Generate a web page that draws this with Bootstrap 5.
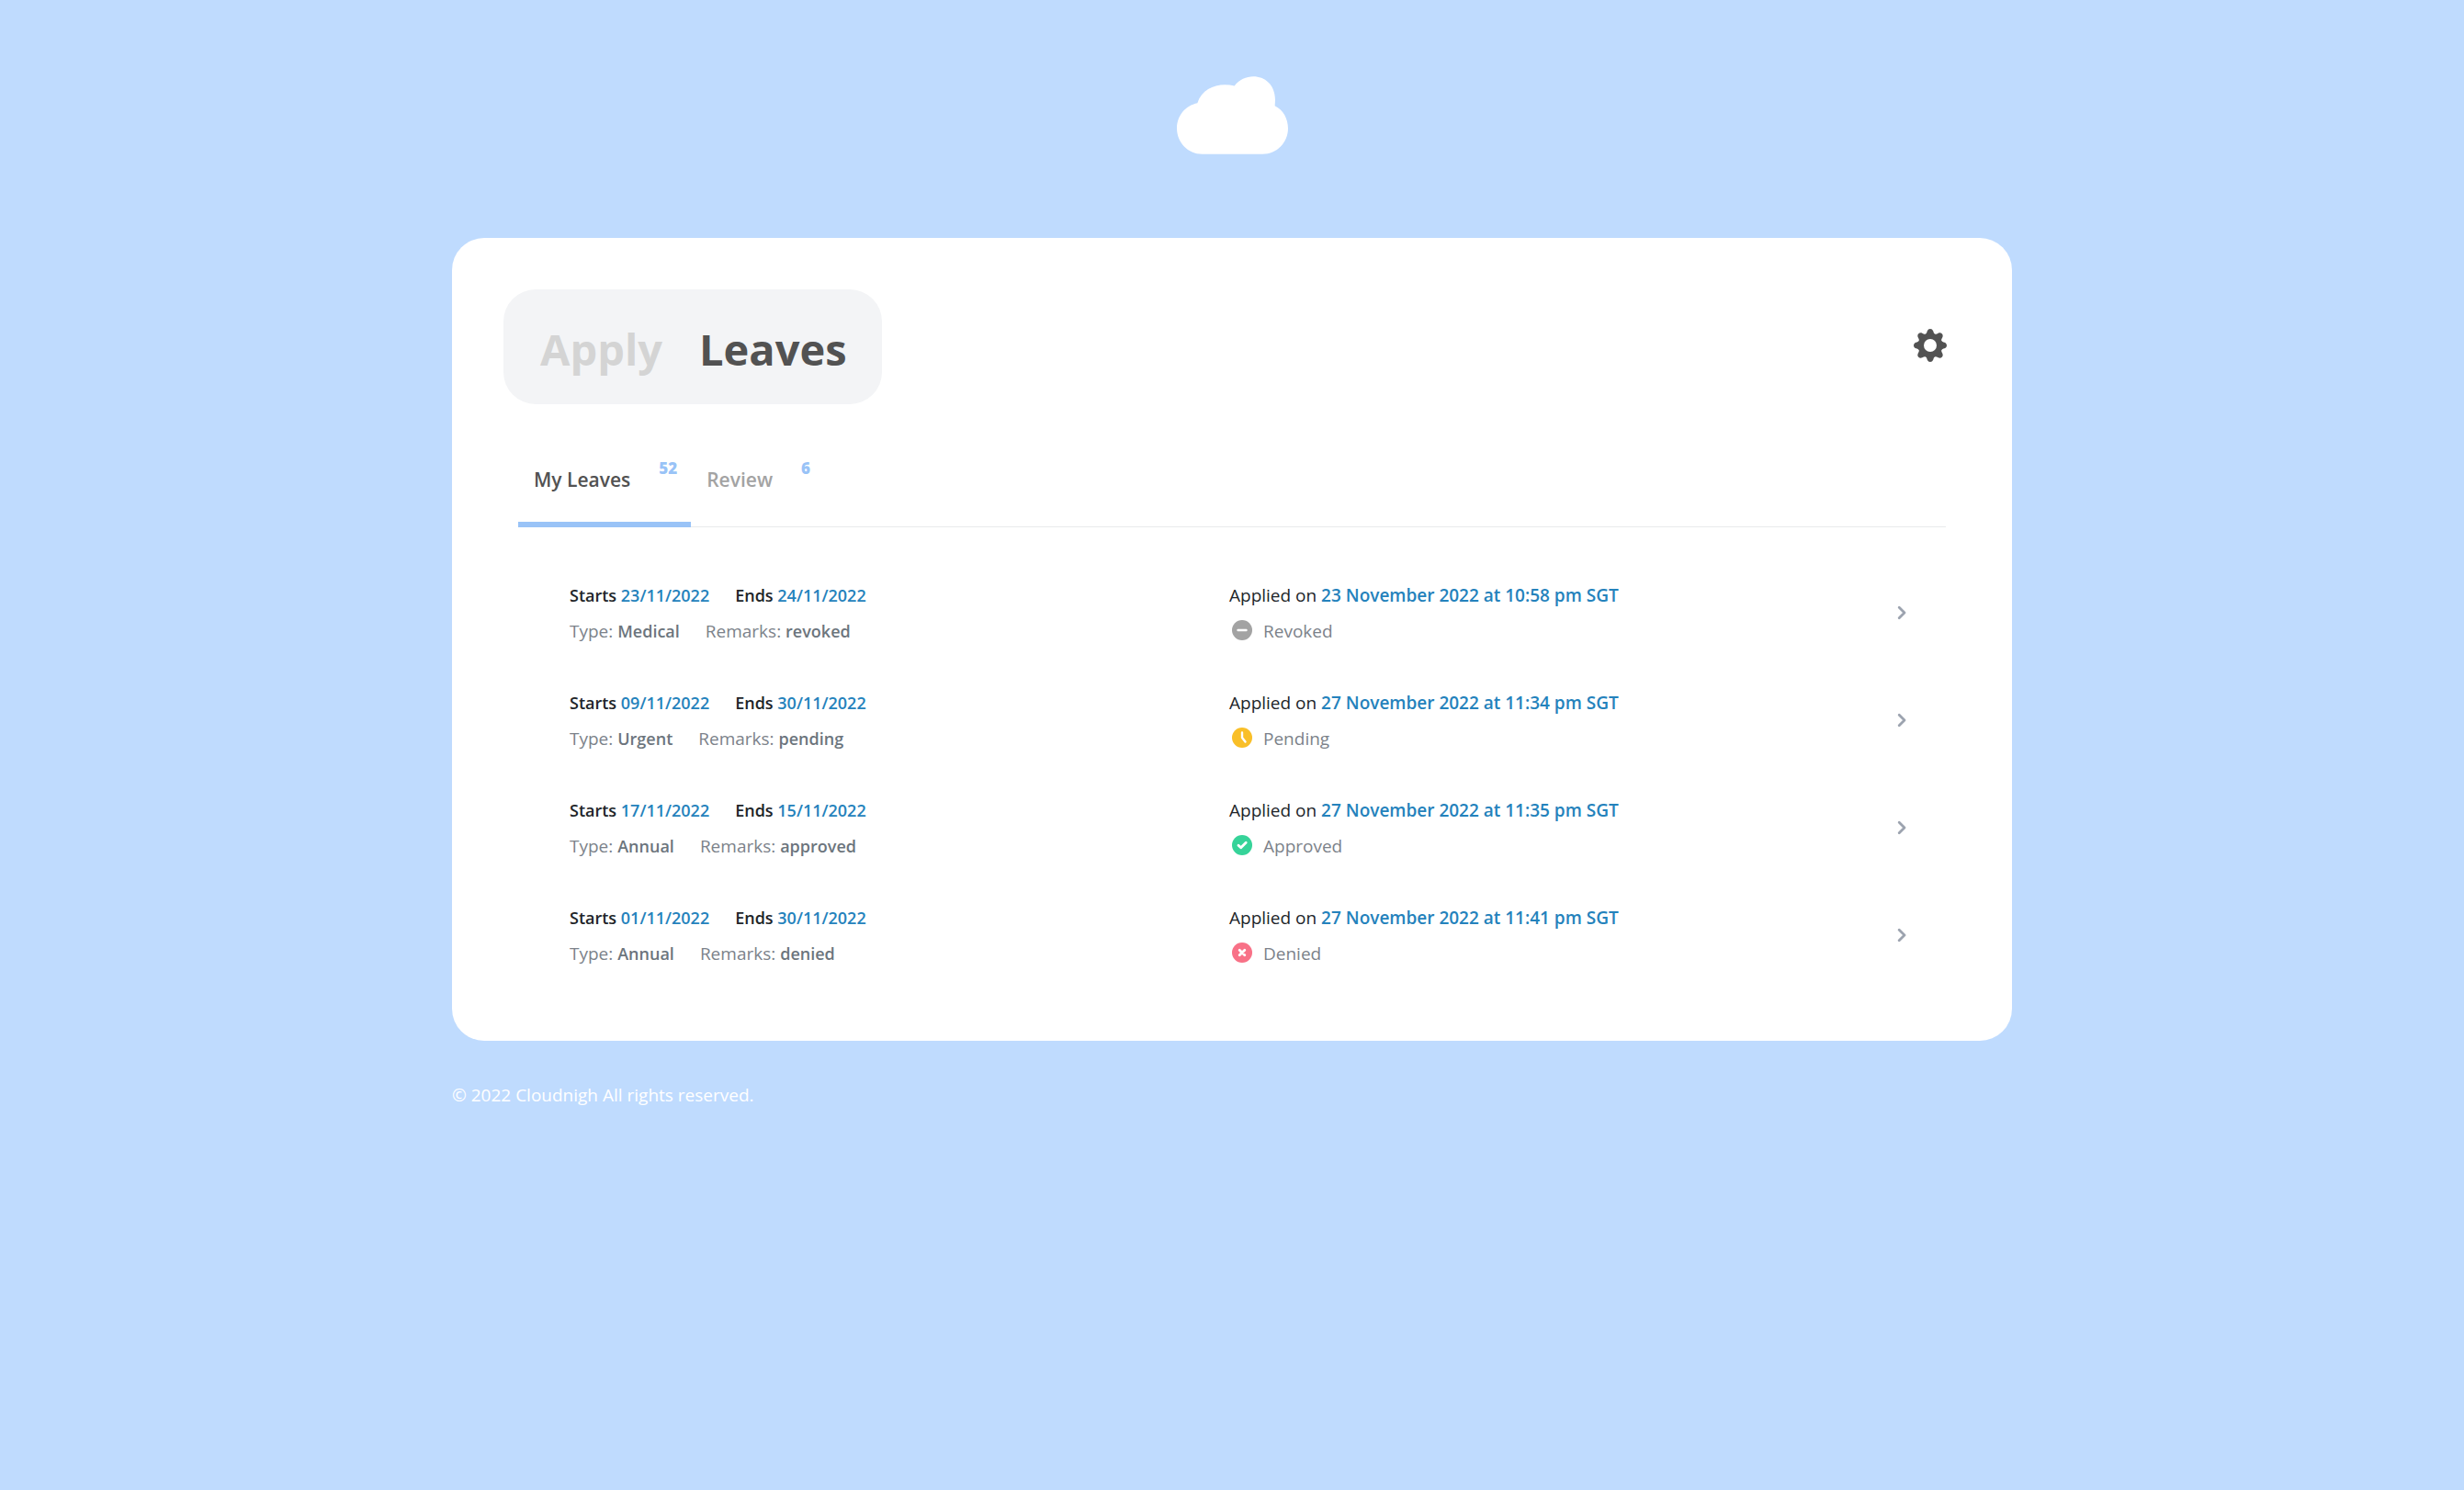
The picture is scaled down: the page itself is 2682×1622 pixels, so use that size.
<!DOCTYPE html>
<html lang="en">
<head>
<meta charset="utf-8">
<meta name="viewport" content="width=device-width, initial-scale=1">
<title>Cloudnigh Leaves</title>
<link href="https://cdn.jsdelivr.net/npm/bootstrap@5.3.0/dist/css/bootstrap.min.css" rel="stylesheet">
<style>
body { background: #bfdbfe; font-family: "Open Sans", "Noto Sans", sans-serif; font-size: 19px; line-height: 39px; color: #212529; }
a { text-decoration: none; }
.shell { max-width: 1698px; }
.brand-bar { padding-top: 83px; padding-bottom: 91px; }
.panel { border-radius: 35px; padding: 56px 56px 55px; }
.switcher { background: #f3f4f6; border-radius: 35px; padding: 31px 38px 25px 40px; gap: 40px; font-size: 47px; line-height: 69px; font-weight: 700; }
.switcher a { color: #d4d4d4; }
.switcher a.active { color: #525252; }
.settings { width: 36px; height: 36px; margin-right: 15px; margin-bottom: 3px; }
.tab-bar { margin: 53px 16px 36px; border-bottom: 1px solid #e9eaec; }
.tab-bar .nav-link { display: flex; gap: 31px; padding: 12px 15px 29px 17px; margin-bottom: -1px; border-bottom: 6px solid transparent; font-size: 21px; line-height: 34px; font-weight: 600; color: #a3a3a3; }
.tab-bar .nav-link.active { color: #525252; border-bottom-color: #99c3f7; }
.tab-count { font-size: 17px; line-height: 9px; font-weight: 800; color: #99c3f7; }
.leave { padding: 19px 50px 20px 72px; }
.pair { gap: 28px; }
.medium { font-size: 18px; font-weight: 600; }
.when { color: #2482bc; font-weight: 600; }
.soft { color: #7c828a; }
.soft .medium { color: #6c757d; }
.status-icon { width: 22px; height: 22px; margin: 0 12px 4px 3px; }
.open-leave { width: 28px; justify-content: center; padding-bottom: 3px; }
.legal { padding-top: 40px; color: #fff; }
</style>
</head>
<body>
<div class="container-fluid shell p-0">
  <header class="brand-bar d-flex justify-content-center">
    <svg width="121" height="85" viewBox="62 70 363 254" role="img" aria-label="Cloudnigh"><path fill="#fff" d="M145 324C98 324 62 286 62 240C62 198 90 165 129 157C146 104 202 89 250 101C290 48 383 64 383 147L382 166C410 180 425 208 425 240C425 286 389 324 342 324Z"/></svg>
  </header>
  <main class="panel bg-white">
    <div class="d-flex justify-content-between align-items-center">
      <nav class="switcher d-flex" aria-label="Sections">
        <a href="#apply">Apply</a>
        <a href="#leaves" class="active" aria-current="page">Leaves</a>
      </nav>
      <button type="button" class="settings btn p-0 border-0 d-flex" aria-label="Settings">
        <svg width="36" height="36" viewBox="-18 -18 36 36" fill="#525252">
          <defs>
            <mask id="hub"><rect x="-18" y="-18" width="36" height="36" fill="#fff"/><circle r="7" fill="#000"/></mask>
            <path id="tooth" d="M-5.3-12C-4-12.8-3.7-14-3.3-15.5C-2.6-17.2-1.4-18 0-18S2.6-17.2 3.3-15.5C3.7-14 4-12.8 5.3-12Z"/>
          </defs>
          <g mask="url(#hub)">
            <circle r="13.2"/>
            <use href="#tooth"/><use href="#tooth" transform="rotate(45)"/><use href="#tooth" transform="rotate(90)"/><use href="#tooth" transform="rotate(135)"/><use href="#tooth" transform="rotate(180)"/><use href="#tooth" transform="rotate(225)"/><use href="#tooth" transform="rotate(270)"/><use href="#tooth" transform="rotate(315)"/>
          </g>
        </svg>
      </button>
    </div>
    <nav class="tab-bar nav" aria-label="Leave lists">
      <a class="nav-link active" href="#mine" aria-current="page">My Leaves <span class="tab-count">52</span></a>
      <a class="nav-link" href="#review">Review <span class="tab-count">6</span></a>
    </nav>
    <ul class="list-unstyled mb-0">
      <li class="leave d-flex align-items-center">
        <div class="row g-0 flex-grow-1">
          <div class="col-6">
            <div class="pair d-flex"><span class="medium">Starts <span class="when">23/11/2022</span></span><span class="medium">Ends <span class="when">24/11/2022</span></span></div>
            <div class="pair d-flex soft"><span>Type: <span class="medium">Medical</span></span><span>Remarks: <span class="medium">revoked</span></span></div>
          </div>
          <div class="col-6">
            <div>Applied on <span class="when">23 November 2022 at 10:58 pm SGT</span></div>
            <div class="d-flex align-items-center soft"><svg class="status-icon" viewBox="0 0 22 22" aria-hidden="true"><circle cx="11" cy="11" r="11" fill="#a3a3a3"/><path d="M6.5 11h9" stroke="#fff" stroke-width="2.4" stroke-linecap="round"/></svg>Revoked</div>
          </div>
        </div>
        <a class="open-leave d-flex" href="#leave-1" aria-label="Open leave"><svg width="20" height="20" viewBox="0 0 20 20" fill="none" stroke="#9ca3af" stroke-width="2.8" stroke-linecap="round" stroke-linejoin="round"><path d="M7.2 4.2L13 10L7.2 15.8"/></svg></a>
      </li>
      <li class="leave d-flex align-items-center">
        <div class="row g-0 flex-grow-1">
          <div class="col-6">
            <div class="pair d-flex"><span class="medium">Starts <span class="when">09/11/2022</span></span><span class="medium">Ends <span class="when">30/11/2022</span></span></div>
            <div class="pair d-flex soft"><span>Type: <span class="medium">Urgent</span></span><span>Remarks: <span class="medium">pending</span></span></div>
          </div>
          <div class="col-6">
            <div>Applied on <span class="when">27 November 2022 at 11:34 pm SGT</span></div>
            <div class="d-flex align-items-center soft"><svg class="status-icon" viewBox="0 0 22 22" aria-hidden="true"><circle cx="11" cy="11" r="11" fill="#f9bf28"/><path d="M11 5.5V11L14.5 15.5" fill="none" stroke="#fff" stroke-width="2.4" stroke-linecap="round" stroke-linejoin="round"/></svg>Pending</div>
          </div>
        </div>
        <a class="open-leave d-flex" href="#leave-2" aria-label="Open leave"><svg width="20" height="20" viewBox="0 0 20 20" fill="none" stroke="#9ca3af" stroke-width="2.8" stroke-linecap="round" stroke-linejoin="round"><path d="M7.2 4.2L13 10L7.2 15.8"/></svg></a>
      </li>
      <li class="leave d-flex align-items-center">
        <div class="row g-0 flex-grow-1">
          <div class="col-6">
            <div class="pair d-flex"><span class="medium">Starts <span class="when">17/11/2022</span></span><span class="medium">Ends <span class="when">15/11/2022</span></span></div>
            <div class="pair d-flex soft"><span>Type: <span class="medium">Annual</span></span><span>Remarks: <span class="medium">approved</span></span></div>
          </div>
          <div class="col-6">
            <div>Applied on <span class="when">27 November 2022 at 11:35 pm SGT</span></div>
            <div class="d-flex align-items-center soft"><svg class="status-icon" viewBox="0 0 22 22" aria-hidden="true"><circle cx="11" cy="11" r="11" fill="#36d399"/><path d="M7 11.2L9.7 13.8L15.2 8.2" fill="none" stroke="#fff" stroke-width="2.8" stroke-linecap="round" stroke-linejoin="round"/></svg>Approved</div>
          </div>
        </div>
        <a class="open-leave d-flex" href="#leave-3" aria-label="Open leave"><svg width="20" height="20" viewBox="0 0 20 20" fill="none" stroke="#9ca3af" stroke-width="2.8" stroke-linecap="round" stroke-linejoin="round"><path d="M7.2 4.2L13 10L7.2 15.8"/></svg></a>
      </li>
      <li class="leave d-flex align-items-center">
        <div class="row g-0 flex-grow-1">
          <div class="col-6">
            <div class="pair d-flex"><span class="medium">Starts <span class="when">01/11/2022</span></span><span class="medium">Ends <span class="when">30/11/2022</span></span></div>
            <div class="pair d-flex soft"><span>Type: <span class="medium">Annual</span></span><span>Remarks: <span class="medium">denied</span></span></div>
          </div>
          <div class="col-6">
            <div>Applied on <span class="when">27 November 2022 at 11:41 pm SGT</span></div>
            <div class="d-flex align-items-center soft"><svg class="status-icon" viewBox="0 0 22 22" aria-hidden="true"><circle cx="11" cy="11" r="11" fill="#f87187"/><path d="M8.2 8.2L13.8 13.8M13.8 8.2L8.2 13.8" fill="none" stroke="#fff" stroke-width="2.8" stroke-linecap="round"/></svg>Denied</div>
          </div>
        </div>
        <a class="open-leave d-flex" href="#leave-4" aria-label="Open leave"><svg width="20" height="20" viewBox="0 0 20 20" fill="none" stroke="#9ca3af" stroke-width="2.8" stroke-linecap="round" stroke-linejoin="round"><path d="M7.2 4.2L13 10L7.2 15.8"/></svg></a>
      </li>
    </ul>
  </main>
  <footer class="legal">© 2022 Cloudnigh All rights reserved.</footer>
</div>
<script src="https://cdn.jsdelivr.net/npm/bootstrap@5.3.0/dist/js/bootstrap.bundle.min.js"></script>
</body>
</html>
